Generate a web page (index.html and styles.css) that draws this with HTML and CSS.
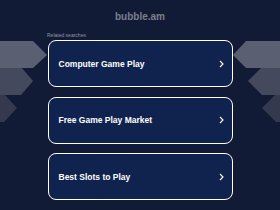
FILE: index.html
```html
<!DOCTYPE html>
<html lang="en">

<head>
    <meta charset="UTF-8">
    <title>bubble.am</title>
    <link rel="stylesheet" href="styles.css">
</head>

<body>

    <svg class="bg-shapes" width="280" height="210" viewBox="0 0 280 210">
        <polygon fill="#35394e" points="0,94 4,94 17,108 4,122 0,122" />
        <polygon fill="#45495d" points="0,67 21,67 33,81 21,95 0,95" />
        <polygon fill="#5b5f72" points="0,41 33,41 47,55 33,68 0,68" />
        <polygon fill="#35394e" points="280,94 276,94 262,108 276,122 280,122" />
        <polygon fill="#45495d" points="280,67 262,67 248,81 262,95 280,95" />
        <polygon fill="#5b5f72" points="280,41 246,41 233,55 246,68 280,68" />
    </svg>

    <div class="page">
        <div class="domain">bubble.am</div>
        <div class="related">Related searches</div>
        <a class="card" href="#">Computer Game Play
            <svg class="arrow" width="5" height="8" viewBox="0 0 5 8"><path d="M1 1 L4 4 L1 7" /></svg>
        </a>
        <a class="card" href="#">Free Game Play Market
            <svg class="arrow" width="5" height="8" viewBox="0 0 5 8"><path d="M1 1 L4 4 L1 7" /></svg>
        </a>
        <a class="card" href="#">Best Slots to Play
            <svg class="arrow" width="5" height="8" viewBox="0 0 5 8"><path d="M1 1 L4 4 L1 7" /></svg>
        </a>
    </div>

</body>

</html>
```

FILE: styles.css
```css
body {
    margin: 0;
    width: 280px;
    height: 210px;
    overflow: hidden;
    background: #121b35;
    font-family: 'Liberation Sans', Arial, sans-serif;
    position: relative;
}

.bg-shapes {
    position: absolute;
    left: 0;
    top: 0;
}

.page {
    position: relative;
    display: flex;
    flex-direction: column;
    align-items: center;
}

.domain {
    margin-top: 11px;
    font-size: 10px;
    font-weight: bold;
    color: #7b7f8d;
    height: 12px;
    line-height: 12px;
}

.related {
    align-self: flex-start;
    margin: 9px 0 0 47px;
    font-size: 5px;
    color: #9397a4;
    height: 6px;
    line-height: 6px;
}

.card {
    box-sizing: border-box;
    width: 185px;
    height: 47px;
    margin-bottom: 9.5px;
    padding: 0 8px 0 10px;
    display: flex;
    align-items: center;
    justify-content: space-between;
    background: #10234f;
    border: 1.5px solid #fff;
    border-radius: 8px;
    color: #fff;
    font-size: 8.5px;
    font-weight: bold;
    text-decoration: none;
}

.card:first-of-type {
    margin-top: 2px;
}

.arrow {
    fill: none;
    stroke: #fff;
    stroke-width: 1.1;
}
```
